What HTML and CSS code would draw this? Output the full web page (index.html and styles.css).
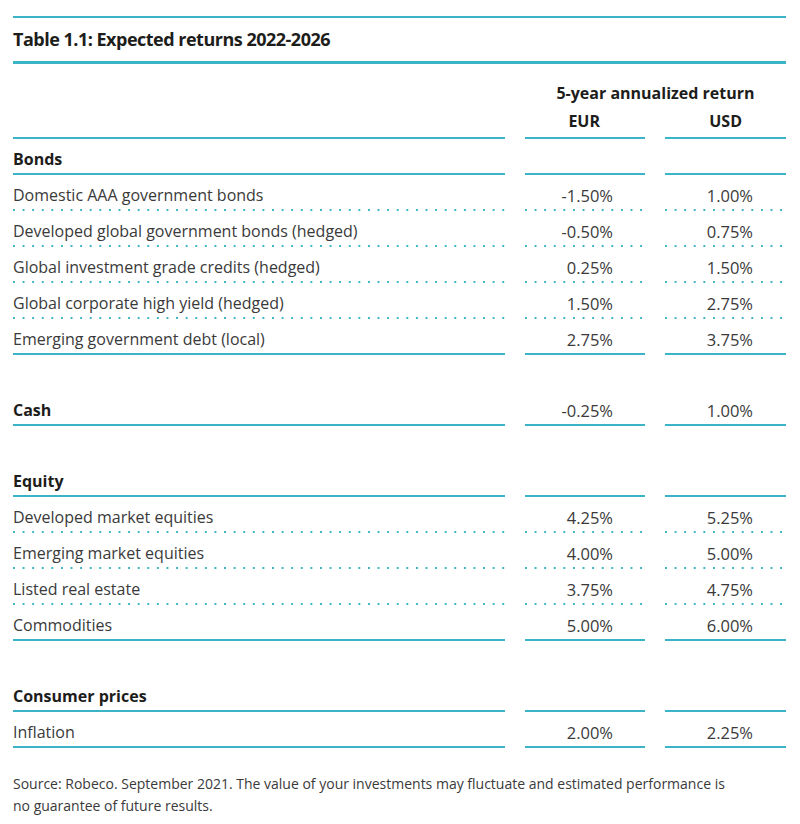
FILE: index.html
```html
<!DOCTYPE html>
<html lang="en">
<head>
<meta charset="utf-8">
<title>Table 1.1: Expected returns 2022-2026</title>
<link rel="stylesheet" href="styles.css">
</head>
<body>
<div class="page">
  <div class="title">Table 1.1: Expected returns 2022-2026</div>
  <div class="table">
    <div class="hcell"></div>
    <div class="group">5-year annualized return</div>

    <div class="hcell line"></div>
    <div class="hcell cur line">EUR</div>
    <div class="hcell cur line usd">USD</div>

    <div class="cell cat line">Bonds</div><div class="cell line"></div><div class="cell line"></div>

    <div class="cell dots">Domestic AAA government bonds</div><div class="cell val dots">-1.50%</div><div class="cell val usd dots">1.00%</div>
    <div class="cell dots">Developed global government bonds (hedged)</div><div class="cell val dots">-0.50%</div><div class="cell val usd dots">0.75%</div>
    <div class="cell dots">Global investment grade credits (hedged)</div><div class="cell val dots">0.25%</div><div class="cell val usd dots">1.50%</div>
    <div class="cell dots">Global corporate high yield (hedged)</div><div class="cell val dots">1.50%</div><div class="cell val usd dots">2.75%</div>
    <div class="cell line">Emerging government debt (local)</div><div class="cell val line">2.75%</div><div class="cell val usd line">3.75%</div>

    <div class="spacer"></div>

    <div class="cell cat line">Cash</div><div class="cell val line">-0.25%</div><div class="cell val usd line">1.00%</div>

    <div class="spacer"></div>

    <div class="cell cat line">Equity</div><div class="cell line"></div><div class="cell line"></div>
    <div class="cell dots">Developed market equities</div><div class="cell val dots">4.25%</div><div class="cell val usd dots">5.25%</div>
    <div class="cell dots">Emerging market equities</div><div class="cell val dots">4.00%</div><div class="cell val usd dots">5.00%</div>
    <div class="cell dots">Listed real estate</div><div class="cell val dots">3.75%</div><div class="cell val usd dots">4.75%</div>
    <div class="cell line">Commodities</div><div class="cell val line">5.00%</div><div class="cell val usd line">6.00%</div>

    <div class="spacer"></div>

    <div class="cell cat line">Consumer prices</div><div class="cell line"></div><div class="cell line"></div>
    <div class="cell line">Inflation</div><div class="cell val line">2.00%</div><div class="cell val usd line">2.25%</div>
  </div>
  <p class="source">Source: Robeco. September 2021. The value of your investments may fluctuate and estimated performance is no guarantee of future results.</p>
</div>
</body>
</html>
```

FILE: styles.css
```css
* { box-sizing: border-box; }
html, body { margin: 0; padding: 0; background: #ffffff; }
body {
  font-family: "Open Sans", "Noto Sans", sans-serif;
  color: #3a3a3a;
}
.page {
  width: 773px;
  margin-left: 13px;
  padding-top: 16px;
}
.title {
  border-top: 2px solid #3cb4c8;
  border-bottom: 3px solid #3cb4c8;
  height: 48px;
  padding-top: 9px;
  font-size: 18px;
  line-height: 24px;
  font-weight: 700;
  color: #1d1d1b;
  letter-spacing: -0.5px;
}
.table {
  display: grid;
  grid-template-columns: 492px 120px 121px;
  column-gap: 20px;
}
.group {
  grid-column: 2 / 4;
  text-align: center;
  font-weight: 700;
  color: #1d1d1b;
  font-size: 16px;
  line-height: 24px;
  padding-top: 17px;
  height: 41px;
}
.hcell {
  font-weight: 700;
  color: #1d1d1b;
  font-size: 16px;
  line-height: 24px;
}
.hcell.line {
  height: 34px;
  padding-top: 4px;
}
.cur { text-align: right; padding-right: 45px; }
.cur.usd { padding-right: 44px; }
.cell {
  height: 36px;
  padding-top: 6px;
  padding-bottom: 2px;
  display: flex;
  align-items: center;
  font-size: 16px;
  white-space: nowrap;
}
.cat { font-weight: 700; color: #1d1d1b; }
.val { justify-content: flex-end; padding-right: 32px; font-size: 16.5px; }
.val.usd { padding-right: 33px; }
.line {
  background: linear-gradient(#3cb4c8, #3cb4c8) left bottom / 100% 2px no-repeat;
}
.dots {
  background: linear-gradient(to right, #3cb4c8 2px, transparent 2px) left bottom / 9.6px 2px repeat-x;
}
.spacer {
  grid-column: 1 / -1;
  height: 35px;
}
.source {
  margin: 25px 0 0;
  font-size: 14px;
  line-height: 22px;
  color: #3a3a3a;
  width: 722px;
}
```
